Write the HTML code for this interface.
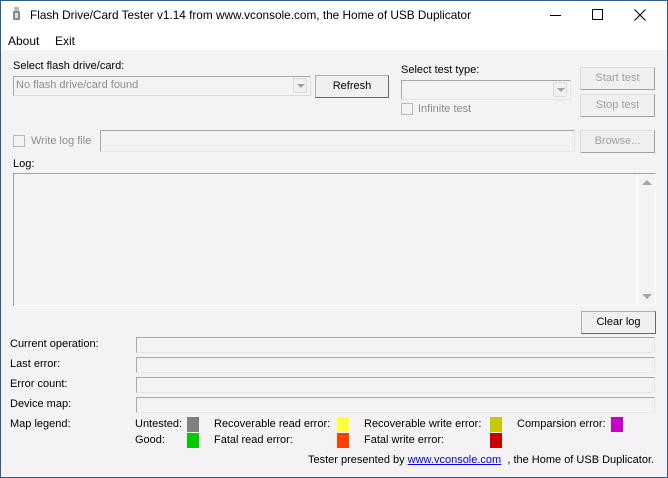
<!DOCTYPE html>
<html><head><meta charset="utf-8"><style>
*{box-sizing:border-box;margin:0;padding:0}
body{width:668px;height:478px;overflow:hidden;background:#f4f2f5;font-family:"Liberation Sans",sans-serif;font-size:11px;color:#000;position:relative}
.a{position:absolute;white-space:nowrap}
.win{position:absolute;left:0;top:0;width:668px;height:478px;border:1px solid #2b5d8a;border-top:none}
.title{position:absolute;left:0;top:0;width:668px;height:31px;background:#fff;border:1px solid #2b5d8a;border-bottom:none}
.menu{position:absolute;left:1px;top:31px;width:666px;height:19px;background:#fff}
.edit{position:absolute;border:1px solid #a9a9a9;border-right-color:#e6e6e6;border-bottom-color:#e6e6e6;background:#f4f2f5}
.btn{position:absolute;border:1px solid #adadad;border-right-color:#696969;border-bottom-color:#696969;background:#f0f0f0;text-align:center;line-height:20px}
.dis{color:#a0a0a0;border-color:#dcdcdc #a0a0a0 #a0a0a0 #dcdcdc}
.cb{position:absolute;width:12px;height:12px;border:1px solid #b9b9b9;background:#f4f2f5}
.sw{position:absolute;width:12px;height:15px}
.dd{position:absolute;width:14px;height:15px;border:1px solid #dcdcdc;background:#f0f0f0}
.dd:after{content:"";position:absolute;left:3px;top:5px;border-left:4px solid transparent;border-right:4px solid transparent;border-top:4px solid #a0a0a0}
.gr{color:#8d8d8d}
</style></head><body>
<div class="title"></div>
<div class="win"></div>
<svg class="a" style="left:13px;top:7px" width="7" height="14"><rect x="1" y="0" width="5" height="4" fill="#bbb"/><rect x="0" y="4" width="7" height="9" rx="1" fill="#8a8a8a"/><rect x="2" y="6" width="3" height="5" fill="#ddd"/></svg>
<div class="a" style="left:30px;top:8px;font-size:11.8px">Flash Drive/Card Tester v1.14 from www.vconsole.com, the Home of USB Duplicator</div>
<div class="a" style="left:550px;top:15px;width:11px;height:1px;background:#000"></div>
<div class="a" style="left:592px;top:9px;width:11px;height:11px;border:1px solid #000"></div>
<svg class="a" style="left:634px;top:9px" width="12" height="12"><path d="M0.5 0.5L11.5 11.5M11.5 0.5L0.5 11.5" stroke="#000" stroke-width="1.1"/></svg>
<div class="menu"></div>
<div class="a" style="left:8px;top:34px;font-size:12px">About</div>
<div class="a" style="left:55px;top:34px;font-size:12px">Exit</div>

<div class="a" style="left:13px;top:60px">Select flash drive/card:</div>
<div class="edit" style="left:13px;top:76px;width:298px;height:20px;border-color:#a9a9a9 #dcdcdc #dcdcdc #a9a9a9"></div>
<div class="a gr" style="left:16px;top:79px">No flash drive/card found</div>
<div class="dd" style="left:293px;top:78px"></div>
<div class="btn" style="left:315px;top:75px;width:74px;height:23px">Refresh</div>

<div class="a" style="left:401px;top:64px">Select test type:</div>
<div class="edit" style="left:401px;top:80px;width:170px;height:20px"></div>
<div class="dd" style="left:553px;top:82px"></div>
<div class="cb" style="left:401px;top:103px"></div>
<div class="a gr" style="left:418px;top:103px">Infinite test</div>

<div class="btn dis" style="left:580px;top:67px;width:75px;height:23px">Start test</div>
<div class="btn dis" style="left:580px;top:94px;width:75px;height:23px">Stop test</div>

<div class="cb" style="left:13px;top:135px"></div>
<div class="a gr" style="left:31px;top:135px">Write log file</div>
<div class="edit" style="left:100px;top:130px;width:475px;height:22px"></div>
<div class="btn dis" style="left:580px;top:130px;width:75px;height:23px">Browse...</div>

<div class="a" style="left:13px;top:158px">Log:</div>
<div class="edit" style="left:13px;top:173px;width:643px;height:133px;border-color:#a0a0a0 #fff #fff #a0a0a0"></div>
<div class="a" style="left:637px;top:174px;width:1px;height:131px;background:#fff"></div>
<div class="a" style="left:642px;top:180px;border-left:5px solid transparent;border-right:5px solid transparent;border-bottom:5px solid #a3a3a3"></div>
<div class="a" style="left:642px;top:294px;border-left:5px solid transparent;border-right:5px solid transparent;border-top:5px solid #a3a3a3"></div>

<div class="btn" style="left:581px;top:311px;width:75px;height:23px">Clear log</div>

<div class="a" style="left:10px;top:338px">Current operation:</div>
<div class="a" style="left:10px;top:358px">Last error:</div>
<div class="a" style="left:10px;top:378px">Error count:</div>
<div class="a" style="left:10px;top:398px">Device map:</div>
<div class="edit" style="left:136px;top:337px;width:519px;height:16px"></div>
<div class="edit" style="left:136px;top:357px;width:519px;height:16px"></div>
<div class="edit" style="left:136px;top:377px;width:519px;height:16px"></div>
<div class="edit" style="left:136px;top:397px;width:519px;height:16px"></div>

<div class="a" style="left:10px;top:418px">Map legend:</div>
<div class="a" style="left:135px;top:418px">Untested:</div>
<div class="sw" style="left:187px;top:417px;background:#808080"></div>
<div class="a" style="left:214px;top:418px">Recoverable read error:</div>
<div class="sw" style="left:337px;top:417px;background:#ffff40"></div>
<div class="a" style="left:364px;top:418px">Recoverable write error:</div>
<div class="sw" style="left:490px;top:417px;background:#c8c800"></div>
<div class="a" style="left:517px;top:418px">Comparsion error:</div>
<div class="sw" style="left:611px;top:417px;background:#c800c8"></div>

<div class="a" style="left:135px;top:434px">Good:</div>
<div class="sw" style="left:187px;top:433px;background:#00c800"></div>
<div class="a" style="left:214px;top:434px">Fatal read error:</div>
<div class="sw" style="left:337px;top:433px;background:#ff4000"></div>
<div class="a" style="left:364px;top:434px">Fatal write error:</div>
<div class="sw" style="left:490px;top:433px;background:#c80000"></div>

<div class="a" style="left:308px;top:454px">Tester presented by <span style="color:#0000ee;text-decoration:underline">www.vconsole.com</span> &nbsp;, the Home of USB Duplicator.</div>
</body></html>
